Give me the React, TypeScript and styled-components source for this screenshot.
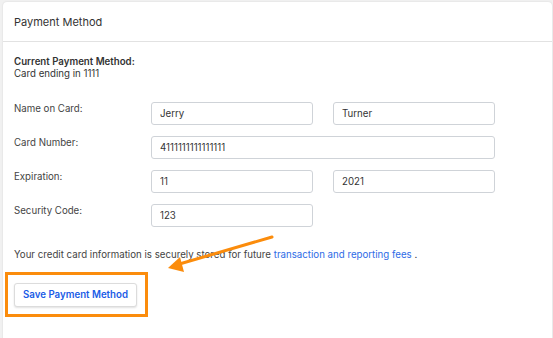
import React from 'react';
import styled, { createGlobalStyle } from 'styled-components';

const GlobalStyle = createGlobalStyle`
  body {
    margin: 0;
    background: #f1f1f1;
    font-family: Inter, 'Liberation Sans', Arial, sans-serif;
    color: #333;
  }
`;

const Page = styled.div`
  padding: 2px 1px 0 3px;
  height: 336px;
  overflow: hidden;
  position: relative;
`;

const Card = styled.div`
  background: #fff;
  border-radius: 4px 4px 0 0;
  box-shadow: 0 0 2px rgba(0, 0, 0, 0.12);
  min-height: 360px;
`;

const CardHeader = styled.div`
  height: 39px;
  display: flex;
  align-items: center;
  padding: 0 11px;
  border-bottom: 1px solid #e2e2e2;
  font-size: 11px;
  color: #333;
`;

const CardBody = styled.div`
  padding: 14px 11px 20px;
  display: flex;
  flex-direction: column;
`;

const Current = styled.div`
  font-size: 9.7px;
  line-height: 12px;
  color: #333;
  margin-bottom: 22px;
`;

const Strong = styled.div`
  font-weight: 600;
`;

const Form = styled.div`
  display: grid;
  grid-template-columns: 117px 162px 162px;
  column-gap: 20px;
  row-gap: 11px;
  align-items: start;
`;

const Label = styled.div`
  font-size: 9.7px;
  line-height: 12px;
  color: #444;
  padding-top: 1px;
`;

const Input = styled.input<{ $wide?: boolean }>`
  box-sizing: border-box;
  height: 23px;
  width: 100%;
  grid-column: ${(p) => (p.$wide ? 'span 2' : 'auto')};
  border: 1px solid #cfd3d8;
  border-radius: 3px;
  padding: 0 8px;
  font-family: inherit;
  font-size: 9.7px;
  color: #333;
  background: #fff;
  outline: none;
`;

const Note = styled.p`
  margin: 22px 0 0;
  font-size: 9.7px;
  line-height: 12px;
  color: #444;
`;

const Link = styled.a`
  color: #2e6be6;
  text-decoration: none;
`;

const ButtonWrap = styled.div`
  position: relative;
  align-self: flex-start;
  margin-top: 21px;
  &::after {
    content: '';
    position: absolute;
    left: -9px;
    top: -10px;
    right: -11px;
    bottom: -10px;
    border: 3px solid #fb8c0c;
    pointer-events: none;
  }
`;

const SaveButton = styled.button`
  height: 24px;
  width: 123px;
  padding: 0;
  border: 1px solid #dcdcdc;
  border-radius: 3px;
  background: #fff;
  box-shadow: 0 1px 2px rgba(0, 0, 0, 0.12);
  color: #1a5ce6;
  font-family: inherit;
  font-weight: 600;
  font-size: 9.7px;
  cursor: pointer;
`;

const Arrow = styled.svg`
  position: absolute;
  left: 160px;
  top: 228px;
  pointer-events: none;
`;

export default function App() {
  return (
    <>
      <GlobalStyle />
      <Page>
        <Card>
          <CardHeader>Payment Method</CardHeader>
          <CardBody>
            <Current>
              <Strong>Current Payment Method:</Strong>
              Card ending in 1111
            </Current>
            <Form>
              <Label>Name on Card:</Label>
              <Input defaultValue="Jerry" />
              <Input defaultValue="Turner" />
              <Label>Card Number:</Label>
              <Input $wide defaultValue="4111111111111111" />
              <Label>Expiration:</Label>
              <Input defaultValue="11" />
              <Input defaultValue="2021" />
              <Label>Security Code:</Label>
              <Input defaultValue="123" />
            </Form>
            <Note>
              Your credit card information is securely stored for future{' '}
              <Link href="#">transaction and reporting fees</Link> .
            </Note>
            <ButtonWrap>
              <SaveButton>Save Payment Method</SaveButton>
            </ButtonWrap>
          </CardBody>
        </Card>
        <Arrow width="120" height="50" viewBox="0 0 120 50">
          <line x1="112" y1="9" x2="16" y2="37" stroke="#fb8c0c" strokeWidth="3" strokeLinecap="round" />
          <polygon points="8,40 20,29 24,44" fill="#fb8c0c" />
        </Arrow>
      </Page>
    </>
  );
}
